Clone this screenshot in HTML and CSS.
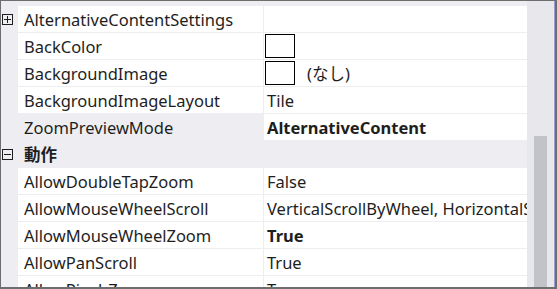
FILE: index.html
```html
<!DOCTYPE html>
<html lang="ja">
<head>
    <meta charset="UTF-8">
    <title>Properties</title>
    <link rel="stylesheet" href="styles.css">
</head>
<body>
    <div class="window">
        <div class="grid">
            <div class="row">
                <div class="gutter">
                    <svg class="toggle" width="11" height="11" viewBox="0 0 11 11"><rect x="0.5" y="0.5" width="10" height="10" fill="none" stroke="#1e1e1e"/><path d="M2 5.5H9M5.5 2V9" stroke="#1e1e1e"/></svg>
                </div>
                <div class="name">AlternativeContentSettings</div>
                <div class="value"></div>
            </div>
            <div class="row">
                <div class="gutter"></div>
                <div class="name">BackColor</div>
                <div class="value"><span class="swatch"></span></div>
            </div>
            <div class="row">
                <div class="gutter"></div>
                <div class="name">BackgroundImage</div>
                <div class="value"><span class="swatch"></span><span class="none">(なし)</span></div>
            </div>
            <div class="row">
                <div class="gutter"></div>
                <div class="name">BackgroundImageLayout</div>
                <div class="value">Tile</div>
            </div>
            <div class="row">
                <div class="gutter"></div>
                <div class="name selected">ZoomPreviewMode</div>
                <div class="value bold">AlternativeContent</div>
            </div>
            <div class="row category">
                <div class="gutter">
                    <svg class="toggle" width="11" height="11" viewBox="0 0 11 11"><rect x="0.5" y="0.5" width="10" height="10" fill="none" stroke="#1e1e1e"/><path d="M2 5.5H9" stroke="#1e1e1e"/></svg>
                </div>
                <div class="cat-name">動作</div>
            </div>
            <div class="row">
                <div class="gutter"></div>
                <div class="name">AllowDoubleTapZoom</div>
                <div class="value">False</div>
            </div>
            <div class="row">
                <div class="gutter"></div>
                <div class="name">AllowMouseWheelScroll</div>
                <div class="value">VerticalScrollByWheel, HorizontalScrollByShiftWheel</div>
            </div>
            <div class="row">
                <div class="gutter"></div>
                <div class="name">AllowMouseWheelZoom</div>
                <div class="value bold">True</div>
            </div>
            <div class="row">
                <div class="gutter"></div>
                <div class="name">AllowPanScroll</div>
                <div class="value">True</div>
            </div>
            <div class="row">
                <div class="gutter"></div>
                <div class="name">AllowPinchZoom</div>
                <div class="value">True</div>
            </div>
        </div>
        <div class="scrollbar">
            <div class="thumb"></div>
        </div>
    </div>
</body>
</html>
```

FILE: styles.css
```css
body {
    margin: 0;
    background-color: #ffffff;
    font-family: "Noto Sans", "Noto Sans CJK JP", sans-serif;
    font-size: 16.5px;
    color: #1e1e1e;
}
.window {
    display: flex;
    height: 289px;
    box-sizing: border-box;
    border-top: 1px solid #6e6e6e;
    border-left: 1px solid #6e6e6e;
    border-bottom: 2px solid #6e6e6e;
    border-right: 2px solid #6e6e6e;
    background-color: #eeeef2;
}
.grid {
    width: 526px;
    padding-top: 5px;
    overflow: hidden;
}
.row {
    display: flex;
    height: 27px;
}
.gutter {
    width: 17px;
    flex-shrink: 0;
    display: flex;
    align-items: center;
    padding-left: 1px;
    box-sizing: border-box;
}
.name {
    width: 246px;
    flex-shrink: 0;
    box-sizing: border-box;
    background-color: #ffffff;
    border-right: 1px solid #eeeef2;
    border-bottom: 1px solid #eeeef2;
    padding: 2px 0 0 6px;
    line-height: 24px;
    white-space: nowrap;
    overflow: hidden;
}
.name.selected {
    background-color: #eeeef2;
}
.value {
    flex: 1;
    display: flex;
    align-items: center;
    min-width: 0;
    box-sizing: border-box;
    background-color: #ffffff;
    border-bottom: 1px solid #eeeef2;
    padding: 2px 0 0 3px;
    line-height: 24px;
    white-space: nowrap;
    overflow: hidden;
}
.bold {
    font-weight: bold;
}
.swatch {
    width: 30px;
    height: 24px;
    box-sizing: border-box;
    border: 1px solid #000000;
    margin: -2px 0 0 -2px;
    flex-shrink: 0;
}
.none {
    margin-left: 12px;
}
.category {
    background-color: #eeeef2;
}
.cat-name {
    padding: 2px 0 0 6px;
    line-height: 24px;
    font-weight: bold;
}
.scrollbar {
    width: 28px;
    box-sizing: border-box;
    border-right: 1px solid #98a0cd;
    background-color: #e8e8ec;
    padding: 135px 7px 0 7px;
    display: flex;
    flex-direction: column;
}
.thumb {
    flex: 1;
    background-color: #c2c3c9;
}
```
